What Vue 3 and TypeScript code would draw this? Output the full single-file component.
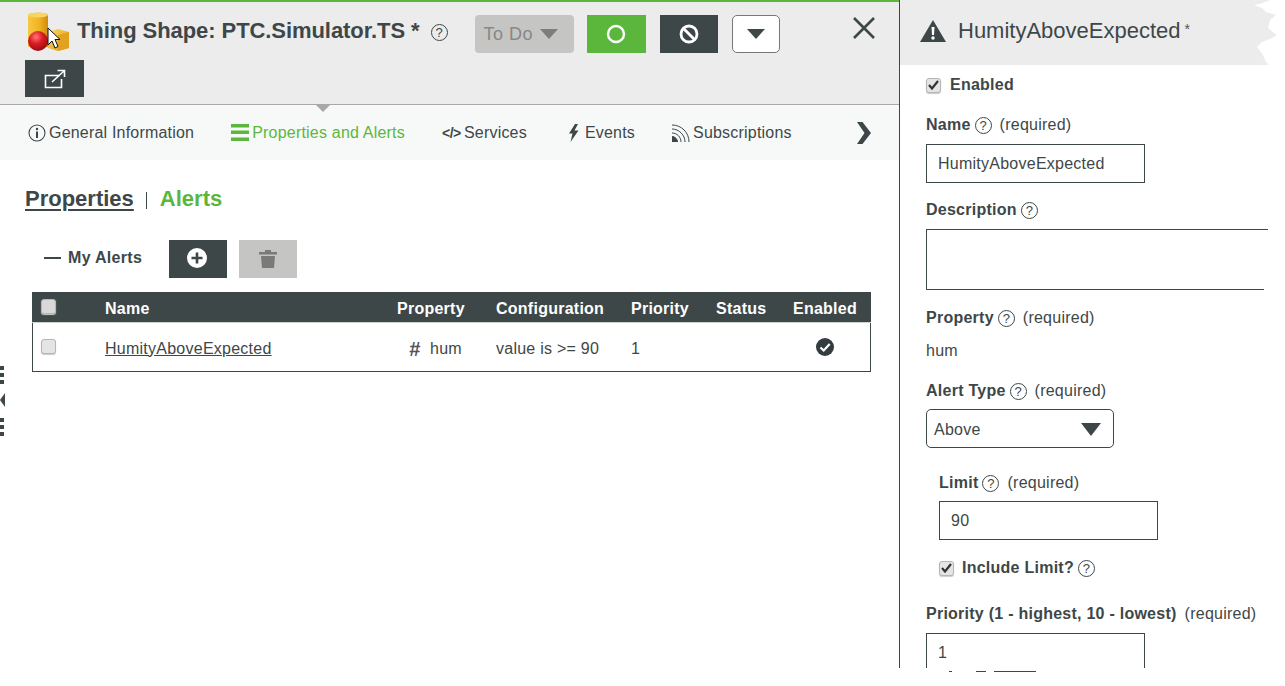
<script setup lang="ts">
interface Column { label: string; width: number }
const columns: Column[] = [
  { label: '', width: 73 },
  { label: 'Name', width: 292 },
  { label: 'Property', width: 99 },
  { label: 'Configuration', width: 135 },
  { label: 'Priority', width: 85 },
  { label: 'Status', width: 77 },
  { label: 'Enabled', width: 78 },
]
</script>

<template>
  <div class="page">
    <main class="left">
      <header class="head">
        <div class="head-row">
          <svg class="logo" width="46" height="42" viewBox="0 0 46 42" aria-hidden="true">
            <defs>
              <linearGradient id="cyl" x1="0" x2="1" y1="0" y2="0">
                <stop offset="0" stop-color="#f6c843" />
                <stop offset=".55" stop-color="#f2b320" />
                <stop offset="1" stop-color="#cf8a10" />
              </linearGradient>
              <linearGradient id="cube" x1="0" x2="1" y1="0" y2="1">
                <stop offset="0" stop-color="#fbd860" />
                <stop offset="1" stop-color="#dd9a14" />
              </linearGradient>
              <radialGradient id="ball" cx=".4" cy=".3" r=".75">
                <stop offset="0" stop-color="#f77" />
                <stop offset=".45" stop-color="#dd1b22" />
                <stop offset="1" stop-color="#8e0c12" />
              </radialGradient>
            </defs>
            <path d="M2 4c0-3 20-3 20 0v32H2z" fill="url(#cyl)" />
            <ellipse cx="12" cy="4" rx="10" ry="2.600" fill="#f8d462" />
            <path d="M22 21l10-3 11 3v16l-11 3-10-3z" fill="url(#cube)" />
            <path d="M32 24l11-3v16l-11 3z" fill="#e2a21d" />
            <circle cx="12" cy="30" r="10" fill="url(#ball)" />
            <path d="M22 17v17l4-4 3 7 3-1.500-3-7h5z" fill="#fff" stroke="#111" stroke-width="1" />
          </svg>
          <h1 class="title">Thing Shape: PTC.Simulator.TS *</h1>
          <span class="help help-title">?</span>
          <button class="btn-todo">To Do<i class="tri tri-todo"></i></button>
          <button class="btn btn-green" aria-label="Start">
            <svg width="20" height="20" viewBox="0 0 20 20"><circle cx="10" cy="10" r="8" fill="none" stroke="#fff" stroke-width="2.400" /></svg>
          </button>
          <button class="btn btn-dark btn-ban" aria-label="Block">
            <svg width="20" height="20" viewBox="0 0 20 20"><circle cx="10" cy="10" r="8" fill="none" stroke="#fff" stroke-width="2.800" /><path d="M4.500 4.500l11 11" stroke="#fff" stroke-width="2.800" /></svg>
          </button>
          <button class="btn-menu" aria-label="More"><i class="tri tri-menu"></i></button>
          <button class="close" aria-label="Close">
            <svg width="24" height="22" viewBox="0 0 24 22"><path d="M2 1l20 20M22 1L2 21" stroke="#3e4748" stroke-width="2.600" /></svg>
          </button>
        </div>
        <button class="btn btn-dark btn-pop" aria-label="Open in new window">
          <svg width="24" height="22" viewBox="0 0 24 22" fill="none" stroke="#fff" stroke-width="1.600">
            <path d="M16 7.500H2.500v12h16V11" />
            <path d="M9 14L21 3M14.500 2.500h7v6.500" />
          </svg>
        </button>
      </header>
      <nav class="tabs">
        <i class="pointer"></i>
        <a class="tab">
          <svg class="ico-info" width="18" height="18" viewBox="0 0 18 18"><circle cx="9" cy="9" r="8" fill="none" stroke="#3e4748" stroke-width="1.100" /><circle cx="9" cy="5" r="1.200" fill="#3e4748" /><path d="M9 7.500v6.500" stroke="#3e4748" stroke-width="2" /></svg>
          General Information
        </a>
        <a class="tab tab-on">
          <svg width="18" height="17" viewBox="0 0 18 17"><path d="M0 0h18v3.500H0zM0 6.500h18V10H0zM0 13.500h18V17H0z" fill="#5bb73b" /></svg>
          Properties and Alerts
        </a>
        <a class="tab"><b class="code">&lt;/&gt;</b>Services</a>
        <a class="tab tab-events">
          <svg width="11" height="18" viewBox="0 0 11 18"><path d="M7 0L1 9.500h3.500L2.500 18 10.500 6.500H6.500L10 0z" fill="#3e4748" /></svg>
          <span class="events-txt">Events</span>
        </a>
        <a class="tab">
          <svg width="18" height="18" viewBox="0 0 18 18" fill="none" stroke="#3e4748" stroke-width="1">
            <path d="M0 1c9.500 0 17 7.500 17 17M0 5c7 0 13 6 13 13M0 9c5 0 9 4 9 9" />
            <path d="M0 12.500c3 0 5.500 2.500 5.500 5.500H0z" fill="#3e4748" />
          </svg>
          Subscriptions
        </a>
        <svg class="chev" width="14" height="22" viewBox="0 0 14 22"><path d="M0 0h5.500L14 11 5.500 22H0l7.500-11z" fill="#3e4748" /></svg>
      </nav>
      <section class="content">
        <div class="subtabs">
          <a class="sub-props">Properties</a>
          <i class="sep"></i>
          <a class="sub-alerts">Alerts</a>
        </div>
        <div class="toolbar">
          <i class="dash"></i>
          <strong class="my-alerts">My Alerts</strong>
          <button class="btn btn-dark btn-add" aria-label="Add">
            <svg class="add-ico" width="20" height="20" viewBox="0 0 20 20"><circle cx="10" cy="10" r="10" fill="#fff" /><path d="M10 4.500v11M4.500 10h11" stroke="#3e4748" stroke-width="2.600" /></svg>
          </button>
          <button class="btn btn-del" aria-label="Delete">
            <svg width="18" height="20" viewBox="0 0 18 20"><path d="M0 3h18v2.500H0zM6 1h6v2H6z" fill="#7a7a7a" /><path d="M2 7h14l-1 12H3z" fill="#7a7a7a" /></svg>
          </button>
        </div>
        <table class="grid">
          <colgroup>
            <col v-for="c in columns" :key="c.label" :style="{ width: c.width + 'px' }" />
          </colgroup>
          <thead>
            <tr>
              <th v-for="c in columns" :key="c.label">
                <i v-if="!c.label" class="check check-head"></i>
                <template v-else>{{ c.label }}</template>
              </th>
            </tr>
          </thead>
          <tbody>
            <tr>
              <td><i class="check check-row"></i></td>
              <td><a class="link">HumityAboveExpected</a></td>
              <td class="prop-cell"><i class="hash">#</i>hum</td>
              <td>value is &gt;= 90</td>
              <td>1</td>
              <td></td>
              <td class="ok-cell">
                <svg width="18" height="18" viewBox="0 0 18 18"><circle cx="9" cy="9" r="9" fill="#333c3f" /><path d="M4.500 9.500l3.200 3 6-6.500" fill="none" stroke="#fff" stroke-width="2.200" /></svg>
              </td>
            </tr>
          </tbody>
        </table>
      </section>
      <div class="grip" aria-hidden="true">
        <i></i><i></i><i></i>
        <b></b>
        <i></i><i></i><i></i>
      </div>
    </main>

    <aside class="right">
      <div class="panel">
        <div class="panel-head">
          <svg width="26" height="22" viewBox="0 0 26 22"><path d="M13 0l13 22H0z" fill="#3e4748" /><path d="M11.500 7h3l-.5 8h-2z" fill="#fff" /><circle cx="13" cy="18" r="1.700" fill="#fff" /></svg>
          <span class="panel-title">HumityAboveExpected</span>
          <span class="star">*</span>
        </div>
        <div class="panel-body">
          <label class="row row-enabled">
            <i class="check on"><svg width="11" height="10" viewBox="0 0 11 10"><path d="M1 5l3 3.500L10 1" fill="none" stroke="#333" stroke-width="2.200" /></svg></i>
            <b class="check-label">Enabled</b>
          </label>
          <div class="row row-name"><b>Name</b><span class="help">?</span><span class="req">(required)</span></div>
          <div class="input input-name">HumityAboveExpected</div>
          <div class="row row-desc"><b>Description</b><span class="help">?</span></div>
          <div class="textarea"></div>
          <div class="row row-prop"><b>Property</b><span class="help">?</span><span class="req">(required)</span></div>
          <div class="row row-hum">hum</div>
          <div class="row row-type"><b>Alert Type</b><span class="help">?</span><span class="req">(required)</span></div>
          <div class="select">Above<i class="tri tri-select"></i></div>
          <div class="indent">
            <div class="row row-limit"><b>Limit</b><span class="help">?</span><span class="req">(required)</span></div>
            <div class="input input-limit">90</div>
            <label class="row row-incl">
              <i class="check on"><svg width="11" height="10" viewBox="0 0 11 10"><path d="M1 5l3 3.500L10 1" fill="none" stroke="#333" stroke-width="2.200" /></svg></i>
              <b class="check-label">Include Limit?</b><span class="help">?</span>
            </label>
          </div>
          <div class="row row-prio"><b>Priority (1 - highest, 10 - lowest)</b><span class="req req-prio">(required)</span></div>
          <div class="input input-prio">1</div>
        </div>
      </div>
      <div class="cut" aria-hidden="true"><i class="c1"></i><i class="c2"></i><i class="c3"></i></div>
    </aside>
  </div>
</template>

<style>
html, body { margin: 0; background: #fff; }
</style>

<style scoped>
.page {
  display: flex;
  width: 1285px;
  height: 686px;
  overflow: hidden;
  font-family: "Liberation Sans", Arial, sans-serif;
  font-size: 16px;
  letter-spacing: .25px;
  color: #3e4748;
  background: #fff;
}
button { font-family: inherit; padding: 0; border: 0; cursor: pointer; display: flex; align-items: center; justify-content: center; }
i { font-style: normal; display: block; }

.left { position: relative; width: 899px; flex: none; }
.head {
  background: #ececec;
  border-top: 2px solid #5bb73b;
  border-bottom: 1px solid #a8a8a8;
  padding: 13px 0 7px 25px;
  box-sizing: content-box;
  height: 82px;
}
.head-row { display: flex; align-items: flex-start; height: 38px; margin-bottom: 7px; }
.logo { flex: none; margin: -4px 0 0 1px; }
.title { margin: 3px 0 0 5px; font-size: 22px; font-weight: 700; line-height: 26px; letter-spacing: -.07px; color: #3e4748; white-space: nowrap; }
.help {
  display: inline-flex; align-items: center; justify-content: center;
  box-sizing: border-box; width: 17px; height: 17px; flex: none;
  border: 1px solid #3e4748; border-radius: 50%;
  font-size: 13px; line-height: 1; letter-spacing: 0; color: #3e4748; font-weight: 400;
}
.help-title { margin: 9px 0 0 11px; }
.btn-todo {
  margin-left: 27px; width: 99px; height: 38px; background: #c5c5c3; border-radius: 4px;
  font-size: 18px; letter-spacing: .5px; color: #888; justify-content: flex-start; padding-left: 9px;
}
.tri { width: 0; height: 0; border-style: solid; border-color: transparent; border-bottom-width: 0; }
.tri-todo { margin-left: 7px; border-width: 10px 9px 0; border-top-color: #7d7d7d; }
.btn { height: 38px; }
.btn-green { margin-left: 13px; width: 59px; background: #5bb73b; }
.btn-dark { background: #3e4748; }
.btn-ban { margin-left: 14px; width: 58px; }
.btn-menu {
  margin-left: 14px; width: 48px; height: 38px; box-sizing: border-box;
  background: #fff; border: 1px solid #777; border-radius: 5px;
}
.tri-menu { margin-left: 1px; border-width: 10px 9px 0; border-top-color: #3e4748; }
.close { margin: 2px 0 0 72px; background: none; }
.btn-pop { width: 59px; height: 37px; }

.tabs {
  position: relative; display: flex; align-items: center; gap: 37px;
  height: 55px; padding-left: 28px; background: #f7f9f9; box-sizing: border-box;
  letter-spacing: .2px;
}
.pointer {
  position: absolute; left: 316px; top: 0; width: 0; height: 0;
  border-style: solid; border-width: 7px 7px 0; border-color: #a8a8a8 transparent transparent;
}
.tab { display: flex; align-items: center; gap: 3px; white-space: nowrap; color: #3e4748; }
.tab-on { color: #5bb73b; }
.code { font-size: 14px; font-weight: 700; width: 19px; letter-spacing: -.5px; }
.tab-events { margin-left: 4px; }
.events-txt { margin-left: 3px; }
.chev { position: absolute; left: 857px; top: 17px; }

.content { padding: 0 0 0 25px; }
.subtabs { display: flex; align-items: center; height: 30px; margin-top: 24px; font-size: 22px; font-weight: 700; letter-spacing: 0; }
.sub-props { color: #3e4748; text-decoration: underline; text-decoration-thickness: 2px; text-underline-offset: 3px; }
.sep { width: 1px; height: 17px; margin: 2px 13px 0 12px; background: #3e4748; }
.sub-alerts { color: #5bb73b; }
.toolbar { display: flex; align-items: center; margin-top: 26px; height: 38px; }
.dash { width: 17px; height: 2px; margin: -2px 0 0 19px; background: #3e4748; }
.my-alerts { margin: -2px 0 0 7px; width: 101px; letter-spacing: .3px; }
.btn-add { width: 58px; }
.add-ico { margin: -2px 2px 0 0; }
.btn-del { width: 58px; margin-left: 12px; background: #c5c5c3; }

.grid {
  table-layout: fixed; width: 839px; margin: 14px 0 0 7px;
  border-collapse: separate; border-spacing: 0; color: #3e4748;
}
.grid th {
  height: 31px; padding: 4px 0 0; box-sizing: border-box; background: #3e4748; color: #fff;
  font-weight: 700; text-align: left; border-bottom: 1px solid #cfd2d2;
}
.grid td {
  height: 49px; padding: 3px 0 0; box-sizing: border-box; background: #fff;
  border-bottom: 1px solid #3e4748;
}
.grid td:first-child { border-left: 1px solid #3e4748; }
.grid td:last-child { border-right: 1px solid #3e4748; }
.check {
  box-sizing: border-box; width: 15px; height: 15px; flex: none; border-radius: 3px;
  background: #e4e4e4; border: 1px solid #b5b5b5; box-shadow: 0 1px 1px #ccc;
  display: flex; align-items: center; justify-content: center;
}
.check-head { margin: -6px 0 0 9px; background: #d8d8d8; }
.check-row { margin: -5px 0 0 8px; }
.link { text-decoration: underline; color: #3e4748; }
.grid td.prop-cell { padding-left: 12px; white-space: nowrap; }
.hash { display: inline-block; width: 21px; font: italic 700 20px/16px "Liberation Sans", sans-serif; color: #555; vertical-align: -2px; }
.grid td.ok-cell { padding-left: 23px; }
.ok-cell svg { display: block; margin-top: -3px; }

.grip { position: absolute; left: 0; top: 366px; width: 5px; }
.grip i { width: 4px; height: 4px; background: #3e4748; margin-bottom: 3px; }
.grip b {
  display: block; width: 0; height: 0; margin: 9px 0 11px;
  border-style: solid; border-width: 7px 5px 7px 0; border-color: transparent #3e4748 transparent transparent;
}

.right { width: 386px; flex: none; }
.panel { height: 668px; box-sizing: border-box; border-left: 1px solid #3e4748; }
.panel-head {
  display: flex; align-items: center; height: 65px; padding: 0 0 4px 20px; box-sizing: border-box;
  background: #ececec;
  clip-path: polygon(0 0, 370px 0, 360px 4px, 354px 5px, 362px 8px, 366px 12px, 376px 15px, 370px 20px, 368px 28px, 374px 33px, 377px 35px, 372px 38px, 362px 42px, 357px 47px, 363px 55px, 366px 62px, 369px 65px, 0 65px);
}
.panel-title { margin-left: 12px; font-size: 22px; letter-spacing: 0; color: #3e4748; white-space: nowrap; }
.star { margin: -4px 0 0 4px; font-size: 14px; color: #555; }
.panel-body { width: 368px; height: 603px; overflow: hidden; padding-left: 26px; box-sizing: border-box; }
.row { display: flex; align-items: center; height: 20px; padding-top: 2px; box-sizing: border-box; white-space: nowrap; }
.row .help { margin-left: 4px; }
.req { margin-left: 8px; }
.check-label { margin-left: 8px; }
.row-enabled { margin-top: 10px; padding-top: 0; }
.row-enabled .check-label { margin-left: 9px; }
.row-name { margin-top: 19px; }
.input { box-sizing: border-box; width: 219px; height: 39px; border: 1px solid #3e4748; padding-left: 11px; display: flex; align-items: center; background: #fff; }
.input-name { margin-top: 10px; }
.row-desc { margin-top: 16px; }
.textarea { position: relative; box-sizing: border-box; width: 360px; height: 61px; margin-top: 10px; border: 1px solid #3e4748; }
.textarea::after { content: ""; position: absolute; left: 337px; bottom: -1px; width: 10px; height: 2px; background: #fff; }
.row-prop { margin-top: 17px; }
.row-hum { margin-top: 13px; }
.row-type { margin-top: 20px; }
.select {
  position: relative; box-sizing: border-box; width: 188px; height: 39px; margin-top: 9px; padding: 2px 0 0 7px;
  border: 1px solid #3e4748; border-radius: 5px; display: flex; align-items: center;
}
.tri-select { position: absolute; left: 154px; top: 13px; border-width: 13px 10px 0; border-top-color: #3e4748; }
.indent { padding-left: 13px; }
.row-limit { margin-top: 24px; }
.input-limit { margin-top: 9px; }
.row-incl { margin-top: 17px; }
.row-prio { margin-top: 26px; }
.input-prio { margin-top: 10px; align-items: flex-start; padding-top: 10px; height: 50px; }
.cut { position: relative; display: flex; height: 1px; margin-top: 3px; }
.cut i { position: absolute; height: 1px; background: #3e4748; }
.c1 { left: 50px; width: 3px; }
.c2 { left: 77px; width: 10px; }
.c3 { left: 95px; width: 42px; }
</style>
